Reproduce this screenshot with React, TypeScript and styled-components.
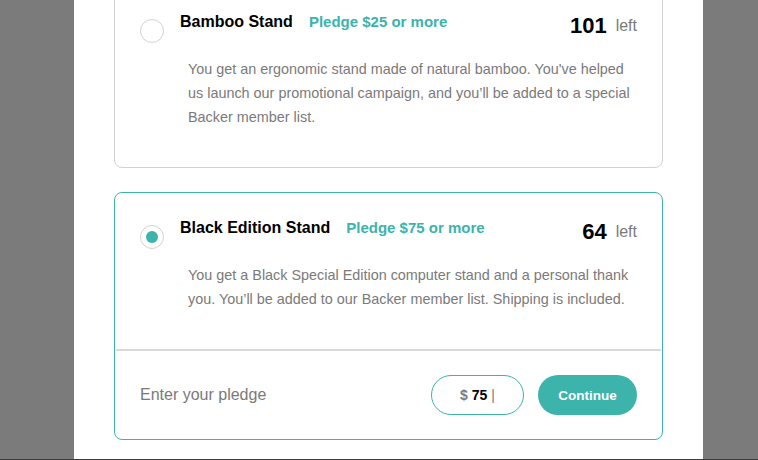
import React from "react";
import styled, { createGlobalStyle } from "styled-components";

const teal = "#3cb3ab";
const grey = "#7a7a7a";

const GlobalStyle = createGlobalStyle`
  html, body { margin: 0; padding: 0; }
  body {
    background: #7a7b7a;
    font-family: "Liberation Sans", Arial, sans-serif;
  }
  * { box-sizing: border-box; }
`;

const Page = styled.div`
  width: 758px;
  height: 460px;
  display: flex;
  flex-direction: column;
  overflow: hidden;
  background: #7a7b7a;
`;

const Backdrop = styled.div`
  flex: 1;
  display: flex;
  padding-left: 74px;
  overflow: hidden;
`;

const BottomStrip = styled.div`
  height: 1px;
  background: #3b3d3c;
`;

const Modal = styled.div`
  width: 629px;
  background: #fff;
  padding: 0 40px;
  overflow: hidden;
`;

const List = styled.div`
  display: flex;
  flex-direction: column;
  gap: 24px;
  margin-top: -14px;
`;

const Card = styled.div<{ $selected?: boolean }>`
  border: 1px solid ${(p) => (p.$selected ? teal : "#d2d2d2")};
  border-radius: 8px;
  background: #fff;
`;

const CardBody = styled.div`
  padding: 23px 25px 38px;
`;

const Header = styled.div`
  display: flex;
  align-items: flex-start;
`;

const Radio = styled.span<{ $checked?: boolean }>`
  width: 24px;
  height: 24px;
  margin-top: 9px;
  border-radius: 50%;
  border: 1px solid #d2d2d2;
  display: flex;
  align-items: center;
  justify-content: center;
  flex-shrink: 0;
  &::after {
    content: "";
    width: 12px;
    height: 12px;
    border-radius: 50%;
    background: ${(p) => (p.$checked ? teal : "transparent")};
  }
`;

const TitleGroup = styled.div`
  display: flex;
  align-items: baseline;
  gap: 16px;
  margin-left: 16px;
`;

const Title = styled.h3`
  margin: 0;
  font-size: 16px;
  line-height: 24px;
  font-weight: 700;
  color: #000;
`;

const Pledge = styled.span`
  font-size: 15px;
  line-height: 24px;
  font-weight: 700;
  color: ${teal};
`;

const Stock = styled.div`
  margin-left: auto;
  margin-top: 4px;
  display: flex;
  align-items: center;
  gap: 9px;
`;

const Count = styled.span`
  font-size: 22px;
  line-height: 24px;
  font-weight: 700;
  color: #000;
`;

const Left = styled.span`
  font-size: 16px;
  line-height: 20px;
  color: ${grey};
`;

const Description = styled.p`
  margin: 14px 0 0 48px;
  font-size: 14.4px;
  line-height: 24px;
  color: ${grey};
`;

const Divider = styled.hr`
  margin: 0 1px;
  border: 0;
  height: 2px;
  background: #d9d9d9;
`;

const PledgeRow = styled.div`
  display: flex;
  align-items: center;
  padding: 24px 25px;
`;

const PledgeLabel = styled.span`
  font-size: 16px;
  color: ${grey};
`;

const Actions = styled.div`
  margin-left: auto;
  display: flex;
  gap: 14px;
`;

const AmountPill = styled.div`
  width: 93px;
  height: 40px;
  border: 1px solid ${teal};
  border-radius: 20px;
  display: flex;
  align-items: center;
  justify-content: center;
  font-size: 14px;
  font-weight: 700;
  color: #000;
`;

const Muted = styled.span`
  color: ${grey};
`;

const Caret = styled.span`
  color: ${grey};
  font-weight: 400;
`;

const ContinueButton = styled.button`
  width: 99px;
  height: 40px;
  border: 0;
  border-radius: 20px;
  background: ${teal};
  color: #fff;
  font-family: inherit;
  font-size: 13.5px;
  font-weight: 700;
  cursor: pointer;
`;

type Reward = {
  title: string;
  pledge: string;
  count: number;
  text: string;
  selected?: boolean;
};

const rewards: Reward[] = [
  {
    title: "Bamboo Stand",
    pledge: "Pledge $25 or more",
    count: 101,
    text:
      "You get an ergonomic stand made of natural bamboo. You've helped us launch our promotional campaign, and you\u2019ll be added to a special Backer member list.",
  },
  {
    title: "Black Edition Stand",
    pledge: "Pledge $75 or more",
    count: 64,
    text:
      "You get a Black Special Edition computer stand and a personal thank you. You\u2019ll be added to our Backer member list. Shipping is included.",
    selected: true,
  },
];

export default function App() {
  return (
    <>
      <GlobalStyle />
      <Page>
        <Backdrop>
          <Modal>
            <List>
              {rewards.map((r) => (
                <Card key={r.title} $selected={r.selected}>
                  <CardBody>
                    <Header>
                      <Radio $checked={r.selected} />
                      <TitleGroup>
                        <Title>{r.title}</Title>
                        <Pledge>{r.pledge}</Pledge>
                      </TitleGroup>
                      <Stock>
                        <Count>{r.count}</Count>
                        <Left>left</Left>
                      </Stock>
                    </Header>
                    <Description>{r.text}</Description>
                  </CardBody>
                  {r.selected && (
                    <>
                      <Divider />
                      <PledgeRow>
                        <PledgeLabel>Enter your pledge</PledgeLabel>
                        <Actions>
                          <AmountPill>
                            <Muted>$</Muted>&nbsp;75&nbsp;<Caret>|</Caret>
                          </AmountPill>
                          <ContinueButton>Continue</ContinueButton>
                        </Actions>
                      </PledgeRow>
                    </>
                  )}
                </Card>
              ))}
            </List>
          </Modal>
        </Backdrop>
        <BottomStrip />
      </Page>
    </>
  );
}
